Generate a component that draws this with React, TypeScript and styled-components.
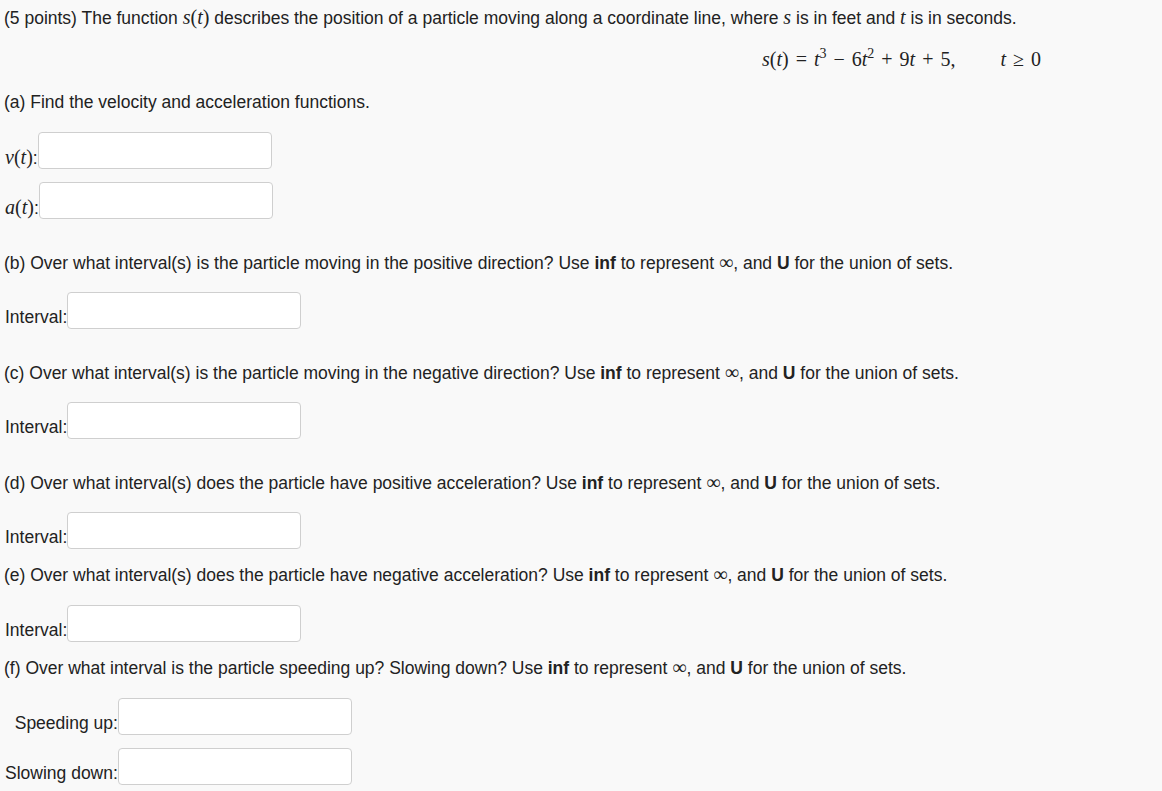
import React from "react";
import styled, { createGlobalStyle } from "styled-components";

const Global = createGlobalStyle`
  html, body { margin: 0; padding: 0; background: #f9f9f9; }
  body { font-family: "Liberation Sans", Arial, sans-serif; font-size: 17.5px; color: #222; }
`;

const Page = styled.div`
  display: flex;
  flex-direction: column;
  padding: 7px 0 0 4px;
  width: 1162px;
  box-sizing: border-box;
`;

const Para = styled.div<{ $mt?: number }>`
  line-height: 20px;
  height: 20px;
  margin-top: ${(p) => p.$mt ?? 0}px;
  white-space: nowrap;
`;

const Math = styled.span`
  font-family: "Liberation Serif", "DejaVu Serif", serif;
  font-size: 20px;
  line-height: 1;
  font-style: italic;
`;

const MathUp = styled.span`
  font-family: "Liberation Serif", "DejaVu Serif", serif;
  font-size: 20px;
  line-height: 1;
  font-style: normal;
`;

const Sup = styled.sup`
  font-size: 14px;
  font-style: normal;
  vertical-align: 8px;
  line-height: 0;
`;

const Display = styled.div`
  display: flex;
  justify-content: flex-end;
  gap: 45px;
  padding-right: 121px;
  margin-top: 21px;
  height: 22px;
  line-height: 22px;
  font-family: "Liberation Serif", "DejaVu Serif", serif;
  font-size: 20px;
  word-spacing: 2px;
  white-space: nowrap;
`;

const Row = styled.div<{ $mt: number }>`
  display: flex;
  align-items: flex-end;
  margin-top: ${(p) => p.$mt}px;
  padding-left: 1px;
`;

const Label = styled.span`
  line-height: 20px;
  height: 20px;
  margin-bottom: 2px;
  white-space: nowrap;
`;

const Input = styled.input`
  width: 234px;
  height: 37px;
  box-sizing: border-box;
  border: 1px solid #cfcfcf;
  border-radius: 4px;
  background: #fff;
  margin: 0;
  padding: 0 8px;
  font: inherit;
`;

const Grid = styled.div`
  display: grid;
  grid-template-columns: auto auto;
  justify-content: start;
  row-gap: 13px;
  margin-top: 21px;
  padding-left: 1px;
`;

const GridLabel = styled.span`
  justify-self: end;
  align-self: end;
  line-height: 20px;
  margin-bottom: 2px;
  white-space: nowrap;
`;

const Infty = () => <MathUp>∞</MathUp>;

const Hint = () => (
  <>
    Use <b>inf</b> to represent <Infty />, and <b>U</b> for the union of sets.
  </>
);

export default function App() {
  return (
    <Page>
      <Global />
      <Para>
        (5 points) The function <Math>s</Math>
        <MathUp>(</MathUp>
        <Math>t</Math>
        <MathUp>)</MathUp> describes the position of a particle moving along a coordinate line, where{" "}
        <Math>s</Math> is in feet and <Math>t</Math> is in seconds.
      </Para>
      <Display>
        <span>
          <i>s</i>(<i>t</i>) = <i>t</i>
          <Sup>3</Sup> − 6<i>t</i>
          <Sup>2</Sup> + 9<i>t</i> + 5,
        </span>
        <span>
          <i>t</i> ≥ 0
        </span>
      </Display>
      <Para $mt={22}>(a) Find the velocity and acceleration functions.</Para>
      <Row $mt={20}>
        <Label>
          <Math>v</Math>
          <MathUp>(</MathUp>
          <Math>t</Math>
          <MathUp>)</MathUp>:
        </Label>
        <Input />
      </Row>
      <Row $mt={13}>
        <Label>
          <Math>a</Math>
          <MathUp>(</MathUp>
          <Math>t</Math>
          <MathUp>)</MathUp>:
        </Label>
        <Input />
      </Row>
      <Para $mt={33}>
        (b) Over what interval(s) is the particle moving in the positive direction? <Hint />
      </Para>
      <Row $mt={20}>
        <Label>Interval:</Label>
        <Input />
      </Row>
      <Para $mt={33}>
        (c) Over what interval(s) is the particle moving in the negative direction? <Hint />
      </Para>
      <Row $mt={20}>
        <Label>Interval:</Label>
        <Input />
      </Row>
      <Para $mt={33}>
        (d) Over what interval(s) does the particle have positive acceleration? <Hint />
      </Para>
      <Row $mt={20}>
        <Label>Interval:</Label>
        <Input />
      </Row>
      <Para $mt={15}>
        (e) Over what interval(s) does the particle have negative acceleration? <Hint />
      </Para>
      <Row $mt={21}>
        <Label>Interval:</Label>
        <Input />
      </Row>
      <Para $mt={15}>
        (f) Over what interval is the particle speeding up? Slowing down? <Hint />
      </Para>
      <Grid>
        <GridLabel>Speeding up:</GridLabel>
        <Input />
        <GridLabel>Slowing down:</GridLabel>
        <Input />
      </Grid>
    </Page>
  );
}
